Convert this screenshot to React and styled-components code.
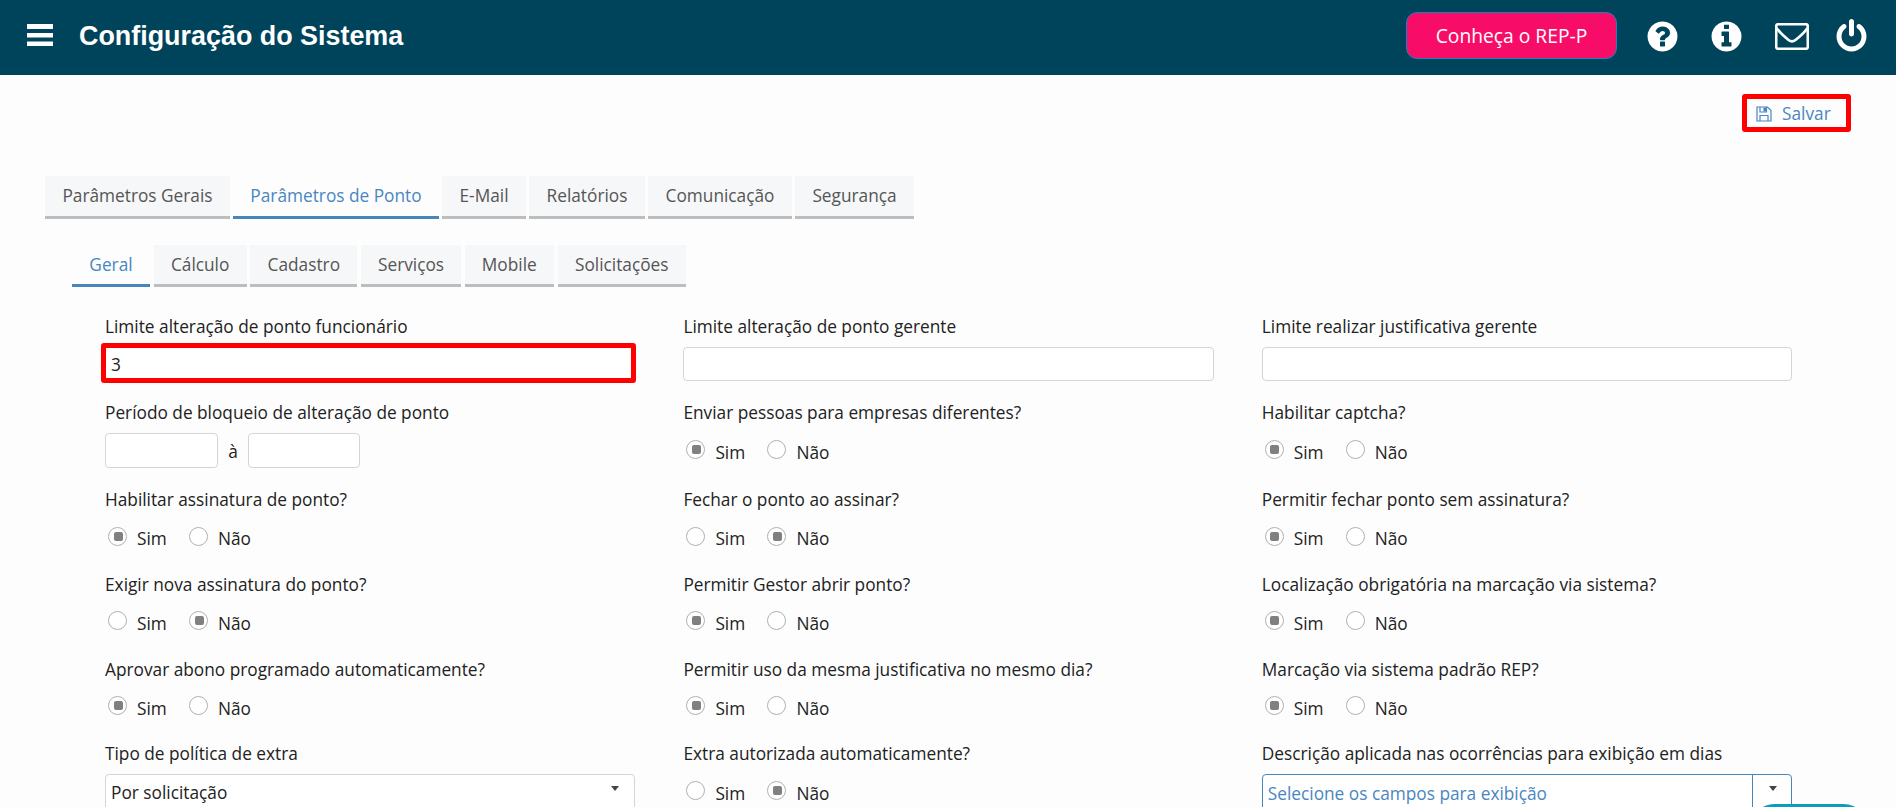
import React from 'react'
import styled, { createGlobalStyle } from 'styled-components'

const GlobalStyle = createGlobalStyle`
  * {
    box-sizing: border-box;
  }

  body {
    margin: 0;
    background: #fdfdfd;
    overflow: hidden;
  }
`

const Page = styled.div`
  position: relative;
  height: 807px;
  width: 100%;
  overflow: hidden;
  background: #fdfdfd;
  color: #222;
  font-family: 'Open Sans', 'Noto Sans', sans-serif;
  font-size: 17.27px;
`

const Header = styled.header`
  display: flex;
  align-items: center;
  height: 75px;
  padding: 0 27px 0 27px;
  background: #00445b;
  color: #fff;
`

const Title = styled.h1`
  flex: 1;
  margin: 0;
  padding-bottom: 4px;
  padding-left: 25px;
  font: bold 26.9px/32px 'Liberation Sans', Arial, sans-serif;
`

const PromoButton = styled.button`
  width: 211px;
  height: 47px;
  margin: 0 28px 4px 0;
  padding: 0 0 1px;
  border: 1px solid #1f7fc0;
  border-radius: 11px;
  background: #f70d67;
  color: #fff;
  font: 19.25px 'Open Sans', sans-serif;
`

const Icon = styled.svg`
  display: block;
  width: ${(p) => p.$size}px;
  height: ${(p) => p.$size}px;
  margin-right: ${(p) => p.$gap || 0}px;
  margin-bottom: 2px;
  flex: none;
  fill: currentColor;
`

const MenuIcon = styled.svg`
  display: block;
  width: 27px;
  height: 22px;
  margin-bottom: 5px;
  fill: #fff;
`

const MailIcon = styled.svg`
  display: block;
  width: 34px;
  height: 27px;
  margin: 0 25px 2px 0;
  fill: none;
  stroke: #fff;
  stroke-width: 2.6;
`

const Toolbar = styled.div`
  display: flex;
  justify-content: flex-end;
  height: 101px;
  padding: 19px 45px 0 0;
`

const SaveButton = styled.button`
  display: flex;
  align-items: center;
  width: 109px;
  height: 38px;
  padding: 0 0 0 9px;
  border: 5px solid #f00;
  border-radius: 3px;
  background: #fdfdfd;
  color: #4a86c0;
  font: 17.27px 'Open Sans', sans-serif;
`

const SaveIcon = styled.svg`
  width: 16px;
  height: 16px;
  margin: 1px 10px 0 0;
  fill: none;
  stroke: currentColor;
  stroke-width: 1.2;
`

const TabBar = styled.nav`
  display: flex;
  gap: ${(p) => p.$gap}px;
  padding-left: ${(p) => p.$indent}px;
  margin-bottom: 26px;
`

const Tab = styled.div`
  width: ${(p) => p.$width}px;
  height: ${(p) => p.$height}px;
  border-bottom: 3px solid ${(p) => (p.$active ? '#4786bd' : '#bdbdbd')};
  background: ${(p) => (p.$active ? '#fdfdfd' : '#f6f7f9')};
  color: ${(p) => (p.$active ? '#4a86c0' : '#555')};
  line-height: ${(p) => p.$height - 3}px;
  text-align: center;
  white-space: nowrap;
`

const Form = styled.main`
  padding: 0 104px 0 105px;
`

const Row = styled.div`
  display: grid;
  grid-template-columns: repeat(3, 530.4px);
  column-gap: 48px;
  height: ${(p) => p.$height}px;
`

const Label = styled.div`
  height: 34px;
  line-height: 27px;
  white-space: nowrap;
`

const Input = styled.div`
  width: ${(p) => p.$width || '100%'};
  height: ${(p) => p.$height || 34}px;
  border: 1px solid #d5d5d5;
  border-radius: 4px;
  background: #fff;
`

const MarkedInput = styled.div`
  width: 535px;
  height: 40px;
  margin: -4px 0 0 -4px;
  padding-left: 5px;
  border: 5px solid #f00;
  border-radius: 3px;
  background: #fff;
  line-height: 33px;
`

const Range = styled.div`
  display: flex;
  align-items: center;
`

const RangeWord = styled.span`
  width: 30px;
  padding-top: 1px;
  text-align: center;
`

const Options = styled.div`
  display: flex;
  padding: ${(p) => (p.$raised ? 6 : 7)}px 0 0 3px;
`

const Option = styled.label`
  display: flex;
  width: 81px;
  gap: 10px;
  line-height: ${(p) => p.$line || 23}px;
`

const Radio = styled.span`
  display: flex;
  align-items: center;
  justify-content: center;
  width: 19px;
  height: 19px;
  border: 1px solid #b0b0b0;
  border-radius: 50%;
  background: #fff;

  &::after {
    content: '';
    width: 9px;
    height: 9px;
    margin-left: 1px;
    border-radius: 2px;
    background: ${(p) => (p.$checked ? '#808080' : 'transparent')};
  }
`

const Select = styled.div`
  display: flex;
  height: 40px;
  padding-left: 5px;
  border: 1px solid ${(p) => (p.$outlined ? '#4786bd' : '#d5d5d5')};
  border-radius: 4px;
  background: #fff;
  color: ${(p) => (p.$outlined ? '#4a86c0' : '#222')};
  line-height: ${(p) => (p.$outlined ? 37 : 35)}px;
`

const SelectText = styled.span`
  flex: 1;
`

const SelectArrow = styled.span`
  display: flex;
  justify-content: center;
  width: 39px;
  padding-top: 11px;
  padding-left: ${(p) => (p.$divided ? 2 : 0)}px;
  border-left: 1px solid ${(p) => (p.$divided ? '#4786bd' : 'transparent')};

  &::after {
    content: '';
    width: 0;
    height: 0;
    border: 4.5px solid transparent;
    border-top: 5px solid #444;
  }
`

// Floating help button, mostly below the fold
const ChatBubble = styled.div`
  position: absolute;
  left: 1752px;
  top: 804px;
  width: 114px;
  height: 44px;
  border-radius: 22px;
  background: #0c9cc0;
`

const circle =
  'm640 0q0 209-103 385.5t-279.5 279.5-385.5 103-385.5-103-279.5-279.5-103-385.5 103-385.5 279.5-279.5 385.5-103 385.5 103 279.5 279.5 103 385.5z'

const mainTabs = [
  ['Parâmetros Gerais', 185],
  ['Parâmetros de Ponto', 206],
  ['E-Mail', 84],
  ['Relatórios', 116],
  ['Comunicação', 144],
  ['Segurança', 119],
]

const subTabs = [
  ['Geral', 78],
  ['Cálculo', 92.8],
  ['Cadastro', 107],
  ['Serviços', 100],
  ['Mobile', 89],
  ['Solicitações', 128.4],
]

const YesNo = ({ label, value, line, raised }) => (
  <div>
    <Label>{label}</Label>
    <Options $raised={raised}>
      <Option $line={line}>
        <Radio $checked={value === 'Sim'} />
        Sim
      </Option>
      <Option $line={line}>
        <Radio $checked={value === 'Não'} />
        Não
      </Option>
    </Options>
  </div>
)

const App = () => {
  return (
    <Page>
      <GlobalStyle />
      <Header>
        <MenuIcon viewBox="0 0 27 22">
          <path d="M0 0h26v5H0zM0 9h26v4.500H0zM0 17.500h26v4.500H0z" />
        </MenuIcon>
        <Title>Configuração do Sistema</Title>
        <PromoButton>Conheça o REP-P</PromoButton>
        <Icon $size={35} $gap={29} viewBox="0 0 1792 1792">
          <path d={'M1024 1376v-192q0-14-9-23t-23-9h-192q-14 0-23 9t-9 23v192q0 14 9 23t23 9h192q14 0 23-9t9-23zm256-672q0-88-55.500-163t-138.500-116-170-41q-243 0-371 213-15 24 8 42l132 100q7 6 19 6 16 0 25-12 53-68 86-92 34-24 86-24 48 0 85.500 26t37.500 59q0 38-20 61t-68 45q-63 28-115.500 86.500t-52.500 125.500v36q0 14 9 23t23 9h192q14 0 23-9t9-23q0-19 21.500-49.500t54.500-49.500q32-18 49-28.500t46-35 44.500-48 28-60.500 12.500-81zM1024 896' + circle} />
        </Icon>
        <Icon $size={35} $gap={31} viewBox="0 0 1792 1792">
          <path d={'M1152 1376v-160q0-14-9-23t-23-9h-96v-512q0-14-9-23t-23-9h-320q-14 0-23 9t-9 23v160q0 14 9 23t23 9h96v320h-96q-14 0-23 9t-9 23v160q0 14 9 23t23 9h448q14 0 23-9t9-23zm-128-896v-160q0-14-9-23t-23-9h-192q-14 0-23 9t-9 23v160q0 14 9 23t23 9h192q14 0 23-9t9-23zM1024 896' + circle} />
        </Icon>
        <MailIcon viewBox="0 0 34 27">
          <rect x="1.200" y="1.200" width="31.600" height="24.600" rx="2" />
          <path d="M1.500 5C5 10 9 13.500 13.500 17Q17 19.800 20.500 17C25 13.500 29 10 32.500 5" />
        </MailIcon>
        <Icon $size={35} viewBox="0 0 1792 1792">
          <path d="M1664 896q0 156-61 298t-164 245-245 164-298 61-298-61-245-164-164-245-61-298q0-182 80.500-343t226.500-270q43-32 95.500-25t83.500 50q32 42 24.500 94.500t-49.500 84.500q-98 74-151.500 181t-53.500 228q0 104 40.500 198.500t109.500 163.500 163.500 109.500 198.500 40.500 198.500-40.500 163.500-109.500 109.500-163.500 40.500-198.500q0-121-53.500-228t-151.500-181q-42-32-49.500-84.500t24.500-94.500q31-43 84-50t95 25q146 109 226.500 270t80.500 343zm-640-768v640q0 52-38 90t-90 38-90-38-38-90v-640q0-52 38-90t90-38 90 38 38 90z" />
        </Icon>
      </Header>

      <Toolbar>
        <SaveButton>
          <SaveIcon viewBox="0 0 16 16">
            <path d="M1 1h10.500L15 4.500V15H1zM4 15V9.500h8V15M4 1v5h6.500V1" />
            <path d="M8 2h2v3H8z" fill="currentColor" />
          </SaveIcon>
          Salvar
        </SaveButton>
      </Toolbar>

      <TabBar $indent={45} $gap={3}>
        {mainTabs.map(([name, width]) => (
          <Tab key={name} $width={width} $height={43} $active={name === 'Parâmetros de Ponto'}>
            {name}
          </Tab>
        ))}
      </TabBar>
      <TabBar $indent={72} $gap={3.75}>
        {subTabs.map(([name, width]) => (
          <Tab key={name} $width={width} $height={42} $active={name === 'Geral'}>
            {name}
          </Tab>
        ))}
      </TabBar>

      <Form>
        <Row $height={86}>
          <div>
            <Label>Limite alteração de ponto funcionário</Label>
            <MarkedInput>3</MarkedInput>
          </div>
          <div>
            <Label>Limite alteração de ponto gerente</Label>
            <Input />
          </div>
          <div>
            <Label>Limite realizar justificativa gerente</Label>
            <Input />
          </div>
        </Row>
        <Row $height={87}>
          <div>
            <Label>Período de bloqueio de alteração de ponto</Label>
            <Range>
              <Input $width="113px" $height={35} />
              <RangeWord>à</RangeWord>
              <Input $width="112px" $height={35} />
            </Range>
          </div>
          <YesNo label="Enviar pessoas para empresas diferentes?" value="Sim" line={25} />
          <YesNo label="Habilitar captcha?" value="Sim" line={25} />
        </Row>
        <Row $height={85}>
          <YesNo label="Habilitar assinatura de ponto?" value="Sim" />
          <YesNo label="Fechar o ponto ao assinar?" value="Não" />
          <YesNo label="Permitir fechar ponto sem assinatura?" value="Sim" />
        </Row>
        <Row $height={85}>
          <YesNo label="Exigir nova assinatura do ponto?" value="Não" line={25} raised />
          <YesNo label="Permitir Gestor abrir ponto?" value="Sim" line={25} raised />
          <YesNo label="Localização obrigatória na marcação via sistema?" value="Sim" line={25} raised />
        </Row>
        <Row $height={84}>
          <YesNo label="Aprovar abono programado automaticamente?" value="Sim" line={25} raised />
          <YesNo label="Permitir uso da mesma justificativa no mesmo dia?" value="Sim" line={25} raised />
          <YesNo label="Marcação via sistema padrão REP?" value="Sim" line={25} raised />
        </Row>
        <Row $height={84}>
          <div>
            <Label>Tipo de política de extra</Label>
            <Select>
              <SelectText>Por solicitação</SelectText>
              <SelectArrow />
            </Select>
          </div>
          <YesNo label="Extra autorizada automaticamente?" value="Não" line={25} />
          <div>
            <Label>Descrição aplicada nas ocorrências para exibição em dias</Label>
            <Select $outlined>
              <SelectText>Selecione os campos para exibição</SelectText>
              <SelectArrow $divided />
            </Select>
          </div>
        </Row>
      </Form>
      <ChatBubble />
    </Page>
  )
}

export default App
